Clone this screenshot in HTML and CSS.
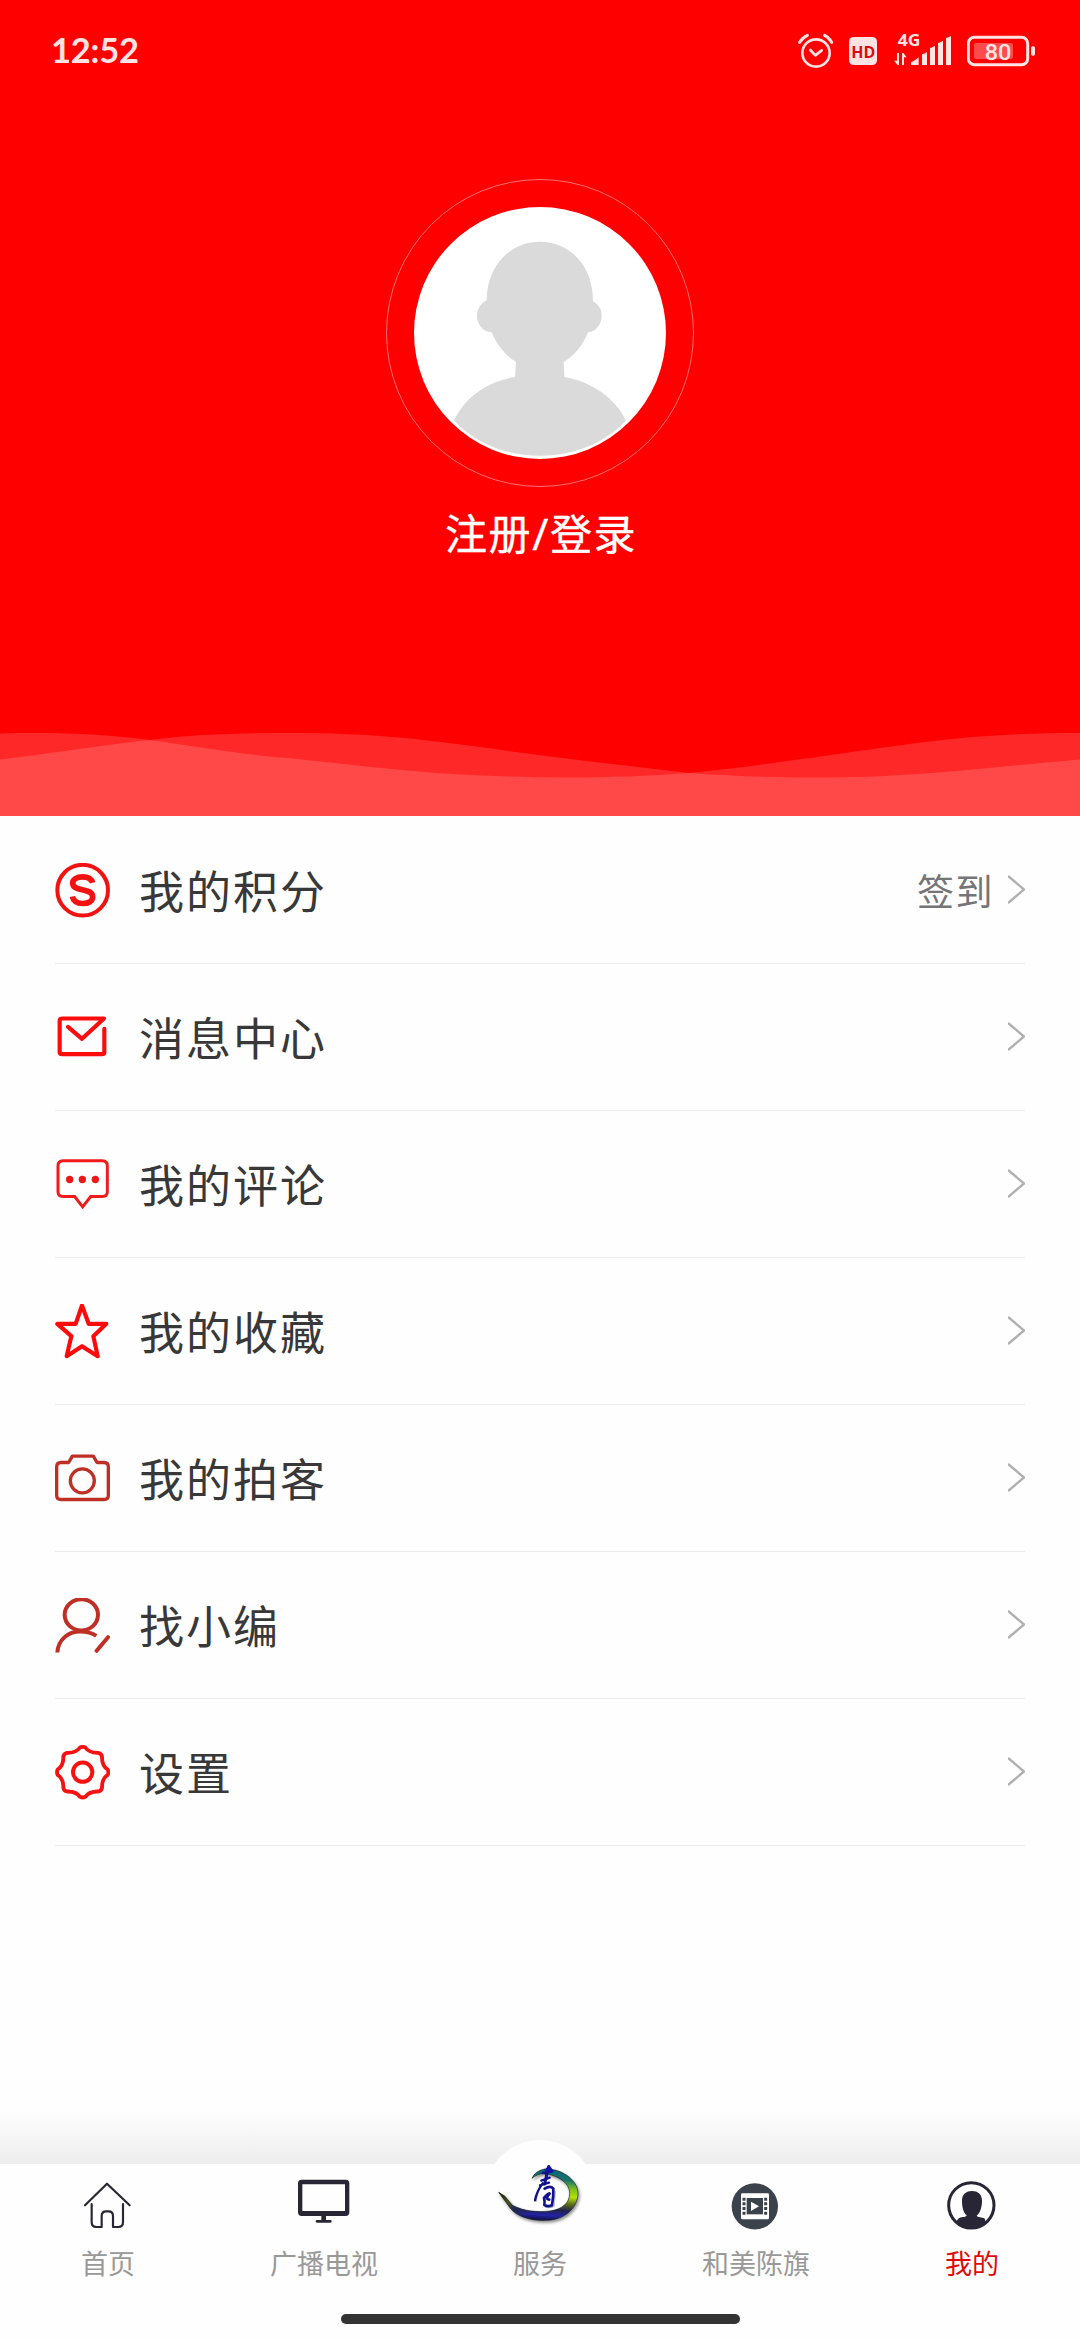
FILE: index.html
```html
<!DOCTYPE html>
<html lang="zh-CN">
<head>
<meta charset="utf-8">
<title>我的</title>
<link rel="stylesheet" href="styles.css">
</head>
<body>
<div class="screen">
  <header class="hero">
    <div class="status">
      <span class="clock">12:52</span>
      <div class="status-icons">
        <svg width="36" height="40" viewBox="114 60 108 120" fill="none" stroke="#ffe3e3" stroke-linecap="round" stroke-linejoin="round"><circle cx="168" cy="129" r="41" stroke-width="8"/><path d="M151 120L166 136L185 121" stroke-width="8"/><path d="M119 97Q127 83 142 76M194 76Q208 83 215 97" stroke-width="9"/></svg>
        <svg width="30" height="40" viewBox="264 60 90 120"><rect x="267" y="81" width="84" height="84" rx="14" fill="#ffe3e3"/><text class="s-hd" x="310" y="143" text-anchor="middle" textLength="72" lengthAdjust="spacingAndGlyphs">HD</text></svg>
        <svg width="61" height="40" viewBox="396 60 183 120" fill="#ffe3e3"><text class="s-net" x="413" y="107" textLength="68" lengthAdjust="spacingAndGlyphs">4G</text><path d="M411 129h6v36h-4L402 152h9zM426 129h4L440 142h-8v23h-6zM453 165v-8Q466 152 476 142v23zM486 165v-32q8-2 15-7v39zM510 165v-51q8-2 15-7v58zM534 165v-66q8-2 15-7v73zM558 165v-81q8-1 15-6v87z"/></svg>
        <svg width="69" height="40" viewBox="621 60 207 120"><rect x="642" y="99" width="117" height="48" rx="6" fill="#ff4b4b"/><rect x="625" y="82" width="178" height="82" rx="18" fill="none" stroke="#ffe3e3" stroke-width="9"/><rect x="813" y="109" width="12" height="28" rx="5" fill="#ffe3e3"/><text class="s-bat" x="714" y="149" text-anchor="middle" textLength="80" lengthAdjust="spacingAndGlyphs">80</text></svg>
      </div>
    </div>
    <div class="ring">
      <svg width="252" height="252" viewBox="132 141 756 756"><circle cx="510" cy="519" r="378" fill="#fff"/><path d="M350 421C351 315 422 245 510 245S669 315 669 424C687 434 695 449 695 467C695 493 677 515 654 517C638 557 612 589 581 606L583 651C665 665 736 714 768 782C700 852 610 887 510 887S320 852 252 782C284 712 352 664 435 651L438 606C407 587 381 556 365 517C339 515 321 493 321 467C321 447 332 431 350 421Z" fill="#dadada"/></svg>
    </div>
    <div class="login">注册<span class="slash">/</span>登录</div>
    <svg class="waves" viewBox="0 733 1080 83" width="1080" height="83" fill="#fff" fill-opacity=".155"><path d="M0 733.5C60 732 105 734 150 740C205 748 235 753 280 757.500C350 763 420 777 565 777.500C610 777.500 650 776 689 773C770 765 860 750 925 742C980 735 1030 733 1080 733V816H0Z"/><path d="M0 759.500C50 754 100 745 150 740C195 734 240 733 290 733C370 733 410 738 480 747C550 757 620 765 689 773C730 776 770 777.500 815 777.500C910 777.500 970 769 1080 759.500V816H0Z"/></svg>
  </header>

  <main class="list">
    <div class="row">
      <svg class="ico" viewBox="75 97.5 165 165"><circle cx="158" cy="179" r="76" fill="none" stroke="#f21212" stroke-width="12"/><path d="M188 157C184 143 174 139 158 139C140 139 128 147 128 158C128 185 188 170 188 199C188 212 176 219 159 219C140 219 130 212 127 198" fill="none" stroke="#f21212" stroke-width="17"/></svg>
      <span class="name">我的积分</span><span class="extra">签到</span>
      <svg class="chev" viewBox="0 0 17 29"><path d="M0 1L16 14.5L0 28"/></svg>
    </div>
    <div class="row">
      <svg class="ico" viewBox="75 538.5 165 165" fill="none" stroke="#fb0d0d" stroke-width="12.500" stroke-linecap="round" stroke-linejoin="round"><path d="M114 589L156 625L222 564H96Q89 564 89 571V665Q89 671 96 671H216Q223 671 223 665V595"/></svg>
      <span class="name">消息中心</span>
      <svg class="chev" viewBox="0 0 17 29"><path d="M0 1L16 14.5L0 28"/></svg>
    </div>
    <div class="row">
      <svg class="ico" viewBox="75 979.5 165 165"><path d="M99 991H217Q232 991 232 1006V1084Q232 1098 217 1098H182L158 1129L134 1098H99Q84 1098 84 1084V1006Q84 991 99 991Z" fill="none" stroke="#f01c1c" stroke-width="9"/><g fill="#ed1818"><circle cx="119" cy="1047" r="11"/><circle cx="157" cy="1047" r="11"/><circle cx="196" cy="1047" r="11"/></g></svg>
      <span class="name">我的评论</span>
      <svg class="chev" viewBox="0 0 17 29"><path d="M0 1L16 14.5L0 28"/></svg>
    </div>
    <div class="row">
      <svg class="ico" viewBox="75 100.5 165 165"><path d="M156 105L176 160H229L190 197L203 257L156 227L110 257L124 197L82 160H137Z" fill="none" stroke="#ff0a0a" stroke-width="12.500" stroke-linejoin="round"/></svg>
      <span class="name">我的收藏</span>
      <svg class="chev" viewBox="0 0 17 29"><path d="M0 1L16 14.5L0 28"/></svg>
    </div>
    <div class="row">
      <svg class="ico" viewBox="75 541.5 165 165" fill="none" stroke="#be3026" stroke-width="10" stroke-linejoin="round"><path d="M93 576H116L127 557H190L201 576H222Q235 576 235 589V675Q235 687 222 687H93Q80 687 80 675V589Q80 576 93 576Z"/><circle cx="157" cy="631" r="36"/></svg>
      <span class="name">我的拍客</span>
      <svg class="chev" viewBox="0 0 17 29"><path d="M0 1L16 14.5L0 28"/></svg>
    </div>
    <div class="row">
      <svg class="ico" viewBox="75 982.5 165 165" fill="none" stroke="#be3026" stroke-width="12"><ellipse cx="154" cy="1033" rx="50" ry="47"/><path d="M82 1146C84 1109 113 1083 151 1083Q180 1083 199 1096" /><path d="M200 1141L234 1100" stroke-linecap="round"/></svg>
      <span class="name">找小编</span>
      <svg class="chev" viewBox="0 0 17 29"><path d="M0 1L16 14.5L0 28"/></svg>
    </div>
    <div class="row">
      <svg class="ico" viewBox="75 133.5 165 165" fill="none" stroke="#f71212" stroke-width="11.500" stroke-linejoin="round"><path d="M150 141Q158 137 166 141Q178 158 205 157Q214 159 216 168Q215 195 233 207Q237 215 233 223Q215 235 216 262Q214 271 205 273Q178 272 166 289Q158 293 150 289Q138 272 111 273Q102 271 100 262Q101 235 83 223Q79 215 83 207Q101 195 100 168Q102 159 111 157Q138 158 150 141Z"/><circle cx="158" cy="215" r="29" stroke-width="12"/></svg>
      <span class="name">设置</span>
      <svg class="chev" viewBox="0 0 17 29"><path d="M0 1L16 14.5L0 28"/></svg>
    </div>
  </main>

  <div class="fade"></div>
  <nav class="tabs">
    <div class="tab">
      <svg width="80" height="80" viewBox="204 192 240 240" fill="none" stroke="#282635" stroke-width="6.5" stroke-linecap="round" stroke-linejoin="round"><path d="M255 316L321 251L389 316"/><path d="M275 312V367Q275 381 289 381H305V348Q305 334 318 334H326Q339 334 339 348V381H355Q369 381 369 367V312"/></svg>
      <span>首页</span>
    </div>
    <div class="tab">
      <svg width="80" height="80" viewBox="852 192 240 240" fill="#282635"><path fill-rule="evenodd" d="M905 239H1037Q1048 239 1048 250V337Q1048 348 1037 348H978V360H991Q995 360 995 364Q995 368 991 368H951Q947 368 947 364Q947 360 951 360H964V348H905Q894 348 894 337V250Q894 239 905 239ZM907 253V333H1035V253Z"/></svg>
      <span>广播电视</span>
    </div>
    <div class="tab center">
      <svg width="100" height="80" viewBox="210 192 300 240">
        <defs>
          <linearGradient id="sw" gradientUnits="userSpaceOnUse" x1="395" y1="208" x2="385" y2="362"><stop offset="0" stop-color="#07647c"/><stop offset=".2" stop-color="#1c7468"/><stop offset=".36" stop-color="#7cc01c"/><stop offset=".52" stop-color="#b4e010"/><stop offset=".66" stop-color="#5c6c18"/><stop offset=".78" stop-color="#24244c"/><stop offset=".9" stop-color="#2222a4"/><stop offset="1" stop-color="#101040"/></linearGradient>
          <linearGradient id="tail" gradientUnits="userSpaceOnUse" x1="236" y1="277" x2="330" y2="335"><stop offset="0" stop-color="#101010"/><stop offset=".35" stop-color="#47521e"/><stop offset=".6" stop-color="#22264e"/><stop offset="1" stop-color="#22264e" stop-opacity="0"/></linearGradient>
          <filter id="sh" x="-20%" y="-20%" width="140%" height="150%"><feDropShadow dx="4" dy="6" stdDeviation="4" flood-color="#000" flood-opacity=".45"/></filter>
        </defs>
        <path filter="url(#sh)" fill="url(#sw)" stroke="#15251f" stroke-width="2" d="M336 235Q346 212 374 207C419 204 475 237 474 282C472 323 435 360 379 361C332 363 289 349 270 323L236 277L255 289L277 316C312 334 350 337 390 333C427 328 449 309 449 280C449 253 424 230 375 220Q352 221 336 235Z"/>
        <path fill="url(#tail)" d="M270 323L236 277L255 289L277 316Q302 331 340 334V356Q290 348 270 323Z"/>
        <g fill="none" stroke-linecap="round" stroke-linejoin="round"><path stroke="#b9b9c9" stroke-width="4" d="M364 256Q350 278 349 304M377 322Q396 325 402 318L406 275"/><g stroke="#12128c"><path stroke-width="9" d="M386 200L378 222M381 221L374 252"/><path stroke-width="7" d="M368 219L397 214M364 242L389 233M360 256L387 248M368 250Q350 274 345 301"/><path stroke-width="8" d="M374 266Q391 255 400 266Q401 288 396 316Q384 321 373 315Q375 304 372 294Q387 277 389 281Q374 297 388 299"/></g></g><path d="M388 195L401 213L389 219L373 211Z" fill="#1212a4"/>
      </svg>
      <span>服务</span>
    </div>
    <div class="tab">
      <svg width="80" height="80" viewBox="168 192 240 240"><circle cx="284.500" cy="319" r="69.500" fill="#3c424b"/><rect x="243" y="280" width="84" height="78" rx="4" fill="#fff"/><path d="M260 294h49v49h-49z" fill="#3c424b"/><path d="M273 305L297 319L273 333Z" fill="#fff"/><path d="M252 293v52M317 293v52" stroke="#3c424b" stroke-width="9" stroke-dasharray="9 5"/></svg>
      <span>和美陈旗</span>
    </div>
    <div class="tab active">
      <svg width="80" height="80" viewBox="816 192 240 240"><circle cx="934" cy="316" r="68" fill="none" stroke="#282635" stroke-width="9"/><path d="M906 302C906 283 918 273 936 273S966 283 966 302C966 324 959 340 950 347C952 352 967 351 973 355Q978 360 974 370Q956 386 934 386Q910 386 892 368Q888 360 898 354C907 350 918 353 920 346C910 338 906 322 906 302Z" fill="#282635"/></svg>
      <span>我的</span>
    </div>
  </nav>
  <div class="home-area"><div class="home-bar"></div></div>
</div>
</body>
</html>
```
FILE: styles.css
```css
* { box-sizing: border-box; }
body { margin: 0; background: #fefefe; font-family: "Noto Sans CJK SC", sans-serif; }
svg { display: block; flex: none; }
.screen { width: 1080px; height: 2340px; display: flex; flex-direction: column; overflow: hidden; }

.hero { height: 816px; background: #f00; display: flex; flex-direction: column; align-items: center; flex: none; }
.status { width: 100%; height: 100px; padding: 0 44px 0 51px; display: flex; align-items: center; justify-content: space-between; color: #ffe3e3; }
.clock { font: 700 34.5px/40px Lato, sans-serif; letter-spacing: -.2px; }
.status-icons { display: flex; gap: 14px; }
.s-hd { font: 700 50px "Open Sans", sans-serif; fill: #d50d12; }
.s-net { font: 700 46px "Open Sans", sans-serif; }
.s-bat { font: 500 66px Roboto, sans-serif; fill: #ffe3e3; }
.ring { width: 308px; height: 308px; margin-top: 79px; border: 1px solid #ff7070; border-radius: 50%; display: flex; align-items: center; justify-content: center; }
.login { margin-top: 15px; height: 60px; line-height: 60px; font-size: 42px; letter-spacing: 1.6px; color: #fff; white-space: nowrap; -webkit-text-stroke: .4px #fff; padding-left: 2px; }
.slash { font-family: "Open Sans", sans-serif; font-size: 44px; line-height: 1; }
.waves { margin-top: auto; }

.list { padding: 1px 55px 0; display: flex; flex-direction: column; flex: none; }
.row { height: 147px; border-bottom: 1px solid #ebebeb; display: flex; align-items: center; }
.ico { width: 55px; height: 55px; }
.name { margin-left: 29px; font-size: 45px; line-height: 64px; letter-spacing: 2px; color: #383838; flex: 1; }
.extra { font-size: 37px; line-height: 54px; letter-spacing: 1.5px; color: #757575; margin-right: 14px; }
.chev { width: 17px; height: 29px; fill: none; stroke: #b0b0b0; stroke-width: 2.4; position: relative; top: -1px; }

.fade { height: 54px; margin-top: auto; background: linear-gradient(#fefefe, #ededed); flex: none; }
.tabs { height: 118px; display: grid; grid-template-columns: repeat(5, 1fr); background: #fefefe; flex: none; }
.tab { display: flex; flex-direction: column; align-items: center; font-size: 27px; line-height: 38px; color: #999; }
.tab span { position: relative; }
.center { position: relative; }
.center::before { content: ""; position: absolute; top: -24px; width: 110px; height: 110px; border-radius: 50%; background: #fefefe; }
.center svg { position: relative; }
.active { color: #de0b0b; }
.home-area { height: 58px; display: flex; justify-content: center; align-items: flex-end; padding-bottom: 16px; background: #fefefe; flex: none; }
.home-bar { width: 399px; height: 10px; border-radius: 5px; background: #333; }
```
